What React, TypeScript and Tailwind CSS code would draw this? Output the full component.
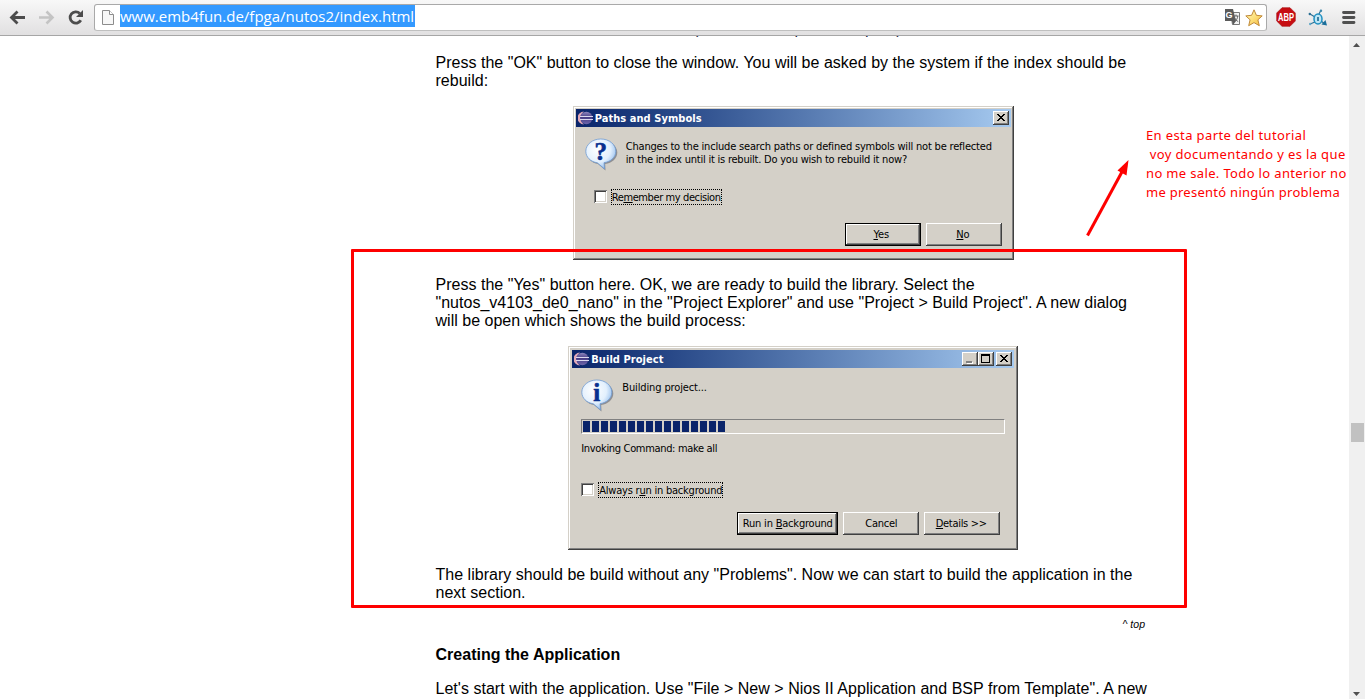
import type { ReactNode } from "react";

const TAHOMA = "font-['DejaVu_Sans_Condensed','DejaVu_Sans',sans-serif] text-[11px] leading-[13px] text-black whitespace-pre";

function EclipseIcon() {
  return (
    <svg width="16" height="16" viewBox="0 0 16 16" className="shrink-0">
      <defs>
        <linearGradient id="ecl" x1="0" y1="0" x2="0" y2="1">
          <stop offset="0" stopColor="#8d86bd" />
          <stop offset="0.45" stopColor="#473c85" />
          <stop offset="1" stopColor="#6d66ab" />
        </linearGradient>
      </defs>
      <path d="M6 1.500a6.500 6.500 0 0 0 0 13a8 8 0 0 1 0-13z" fill="#e3a9b8" />
      <circle cx="8.300" cy="8" r="6.200" fill="url(#ecl)" />
      <path d="M2 6.500h13M2 9.500h13" stroke="#dcd9ef" strokeWidth="1" />
    </svg>
  );
}

function Balloon({ glyph }: { glyph: string }) {
  return (
    <svg width="34" height="34" viewBox="0 0 34 34" className="shrink-0">
      <defs>
        <radialGradient id="bal" cx="0.4" cy="0.35" r="0.7">
          <stop offset="0" stopColor="#ffffff" />
          <stop offset="0.6" stopColor="#e3f0fd" />
          <stop offset="1" stopColor="#8db8ea" />
        </radialGradient>
      </defs>
      <path
        d="M17 2.500C9 2.500 2 8 2 14.500c0 6 4.800 10.500 11 11.600L20.500 32.500l-.3-6.500C27 25 32.300 20.500 32.300 14.500C32.300 8 25.500 2.500 17 2.500z"
        fill="#5f6470"
        opacity="0.6"
      />
      <path
        d="M15.800 1C7.500 1 .8 6.500.8 13.200c0 6 4.800 10.500 11.500 11.600L19.600 31l-.6-6.300C26 23.600 30.800 19.200 30.800 13.200C30.800 6.500 24.300 1 15.800 1z"
        fill="url(#bal)"
        stroke="#6f9bd3"
        strokeWidth="0.8"
      />
      <text
        x="15.800"
        y="21.500"
        textAnchor="middle"
        fontFamily="Liberation Serif"
        fontWeight="bold"
        fontSize="25"
        fill="#08308f"
        stroke="#08308f"
        strokeWidth="0.6"
      >
        {glyph}
      </text>
    </svg>
  );
}

function CaptionButton({ kind }: { kind: "min" | "max" | "close" }) {
  return (
    <button className="h-[14px] w-4 shrink-0 bg-[#d4d0c8] shadow-[inset_-1px_-1px_#404040,inset_1px_1px_#ffffff,inset_-2px_-2px_#808080]">
      <svg width="16" height="14" viewBox="0 0 16 14" shapeRendering="crispEdges" className="block">
        {kind === "min" && (
          <>
            <path d="M5 10h6v2H5z" fill="#fff" />
            <path d="M4 9h6v2H4z" fill="#808080" />
          </>
        )}
        {kind === "max" && <path d="M3 2h9v9H3zM4 4v6h7V4z" fill="#000" fillRule="evenodd" />}
        {kind === "close" && (
          <path
            d="M4 3h2v1h1v1h2V4h1V3h2v1h-1v1h-1v1H9v1h1v1h1v1h1v1h-2V9H9V8H7v1H6v1H4V9h1V8h1V7h1V6H6V5H5V4H4z"
            fill="#000"
          />
        )}
      </svg>
    </button>
  );
}

function TitleBar({ title, buttons }: { title: string; buttons: ReactNode }) {
  return (
    <div className="flex h-[18px] items-start bg-linear-to-r from-[#0a246a] to-[#a6caf0] pr-[2px] pl-[2px] pt-[2px]">
      <div className="-mt-px">
        <EclipseIcon />
      </div>
      <span className="ml-px grow pt-px font-['DejaVu_Sans_Condensed','DejaVu_Sans',sans-serif] text-[11px] leading-[13px] font-bold tracking-[0.05px] whitespace-pre text-white">
        {title}
      </span>
      {buttons}
    </div>
  );
}

function WinButton({ primary, className, children }: { primary?: boolean; className: string; children: ReactNode }) {
  const bevel = primary
    ? "border border-black shadow-[inset_-1px_-1px_#404040,inset_1px_1px_#ffffff,inset_-2px_-2px_#808080]"
    : "shadow-[inset_-1px_-1px_#404040,inset_1px_1px_#ffffff,inset_-2px_-2px_#808080]";
  return (
    <button className={`flex h-[23px] items-center justify-center bg-[#d4d0c8] ${TAHOMA} ${bevel} ${className}`}>
      <span>{children}</span>
    </button>
  );
}

function CheckRow({ width, children }: { width: string; children: ReactNode }) {
  return (
    <label className="flex h-4 items-start gap-1">
      <span className="mt-px size-[13px] shrink-0 bg-white shadow-[inset_1px_1px_#808080,inset_-1px_-1px_#ffffff,inset_2px_2px_#404040,inset_-2px_-2px_#d4d0c8]" />
      <span className={`h-4 border border-dotted border-black pt-px ${TAHOMA} ${width}`}>{children}</span>
    </label>
  );
}

const U = ({ children }: { children: string }) => (
  <span className="underline decoration-1 underline-offset-[1px]">{children}</span>
);

const FRAME =
  "mx-auto bg-[#d4d0c8] shadow-[inset_-1px_-1px_#404040,inset_1px_1px_#d4d0c8,inset_-2px_-2px_#808080,inset_2px_2px_#ffffff]";

function PathsDialog() {
  return (
    <div className={`h-[154px] w-[441px] p-[3px] ${FRAME}`}>
      <TitleBar title="Paths and Symbols" buttons={<CaptionButton kind="close" />} />
      <div className="flex h-[62px] pt-[11px] pl-[9px]">
        <Balloon glyph="?" />
        <div className={`pt-[2px] pl-[7px] ${TAHOMA}`}>
          <div className="tracking-[-0.19px]">Changes to the include search paths or defined symbols will not be reflected</div>
          <div className="tracking-[-0.22px]">in the index until it is rebuilt. Do you wish to rebuild it now?</div>
        </div>
      </div>
      <div className="pl-[18px]">
        <CheckRow width="w-[111px] tracking-[-0.4px]">
          Re<U>m</U>ember my decision
        </CheckRow>
      </div>
      <div className="mt-[18px] flex justify-end gap-[5px] pr-[9px]">
        <WinButton primary className="w-[76px] pr-[3px] tracking-[-0.1px]">
          <U>Y</U>es
        </WinButton>
        <WinButton className="w-[76px] pr-[2px] tracking-[-0.3px]">
          <U>N</U>o
        </WinButton>
      </div>
    </div>
  );
}

function BuildDialog() {
  return (
    <div className={`h-[204px] w-[450px] p-1 ${FRAME}`}>
      <TitleBar
        title="Build Project"
        buttons={
          <div className="flex">
            <CaptionButton kind="min" />
            <CaptionButton kind="max" />
            <div className="w-[2px]" />
            <CaptionButton kind="close" />
          </div>
        }
      />
      <div className="flex flex-col pl-[9px]">
        <div className="flex h-[51px] pt-3">
          <div className="-mt-px">
            <Balloon glyph="i" />
          </div>
          <div className={`pt-px pl-[7px] tracking-[-0.13px] ${TAHOMA}`}>Building project...</div>
        </div>
        <div className="flex h-[15px] w-[424px] gap-[2px] border border-t-[#808080] border-r-white border-b-white border-l-[#808080] p-px">
          {Array.from({ length: 16 }, (_, i) => (
            <span key={i} className="h-[11px] w-[7px] bg-[#0a246a]" />
          ))}
        </div>
        <div className={`mt-2 tracking-[-0.33px] ${TAHOMA}`}>Invoking Command: make all</div>
        <div className="mt-[27px]">
          <CheckRow width="w-[125px] tracking-[-0.22px]">
            Always r<U>u</U>n in background
          </CheckRow>
        </div>
        <div className="mt-[14px] flex justify-end gap-[5px] pr-[14px]">
          <WinButton primary className="w-[101px] tracking-[-0.2px]">
            Run in <U>B</U>ackground
          </WinButton>
          <WinButton className="w-[76px] tracking-[-0.25px]">Cancel</WinButton>
          <WinButton className="w-[76px] pr-[2px] tracking-[-0.3px]">
            <U>D</U>etails &gt;&gt;
          </WinButton>
        </div>
      </div>
    </div>
  );
}

function Toolbar() {
  return (
    <header className="flex h-9 shrink-0 items-start border-b border-[#a6a6a6] bg-linear-to-b from-[#f8f8f8] to-[#e1e0e1]">
      <div className="flex w-[94px] shrink-0 pt-[9px] pl-2">
        <svg width="86" height="18" viewBox="0 0 86 18" fill="none">
          <path d="M17 8.500H4M9.500 2.500L3.500 8.500l6 6" stroke="#4c4c4c" strokeWidth="2.800" />
          <path d="M31 8.500h13M38.500 2.500l6 6l-6 6" stroke="#c4c4c4" strokeWidth="2.600" />
          <path d="M71.800 4.400A5.700 5.700 0 1 0 72.800 11.300" stroke="#4c4c4c" strokeWidth="2.800" />
          <path d="M75 1v7h-7z" fill="#4c4c4c" />
        </svg>
      </div>
      <div className="mt-1 flex h-[27px] w-[1173px] shrink-0 items-start rounded-[3px] border border-[#a9a9a9] border-b-[#bfbfbf] bg-white">
        <svg width="12" height="16" viewBox="0 0 12 16" className="mt-[5px] ml-[7px] shrink-0">
          <path d="M.5.500h7l4 4v10H.5z" fill="#f7f7f7" stroke="#8c8c8c" />
          <path d="M7.500.500v4h4" fill="#fff" stroke="#8c8c8c" />
        </svg>
        <div className="ml-[6px] h-[22px] w-[295px] bg-[#3399ff] font-['Open_Sans',sans-serif] text-[15px] leading-[22px] whitespace-nowrap text-white">
          www.emb4fun.de/fpga/nutos2/index.html
        </div>
        <div className="grow" />
        <svg width="17" height="17" viewBox="0 0 17 17" className="mt-[4px] mr-[4px] shrink-0">
          <path d="M6.500 3.500h9v12h-7z" fill="#f4f4f4" stroke="#777" />
          <path d="M1 0h8l3 12H1z" fill="#5b5b5b" />
          <text x="1.500" y="9" fontFamily="Liberation Sans" fontWeight="bold" fontSize="9" fill="#fff">
            G
          </text>
          <path d="M9.500 7h5M12 5.500V7M10.500 12.500c2-1 3-3 3.200-5.500M10.500 8.500c.8 2 2 3.300 3.700 4" stroke="#666" fill="none" />
          <path d="M8 12h4l-3 4z" fill="#5b5b5b" />
        </svg>
        <svg width="18" height="18" viewBox="0 0 18 18" className="mt-[4px] mr-[3px] shrink-0">
          <defs>
            <linearGradient id="star" x1="0" y1="0" x2="1" y2="1">
              <stop offset="0" stopColor="#fff7c0" />
              <stop offset="0.5" stopColor="#fde07a" />
              <stop offset="1" stopColor="#f3b63a" />
            </linearGradient>
          </defs>
          <path
            d="M9 .8l2.400 5.500l5.800.6l-4.300 3.900l1.400 5.900L9 13.600l-5.300 3.100l1.400-5.900L.8 6.900l5.800-.6z"
            fill="url(#star)"
            stroke="#c08a3a"
            strokeLinejoin="round"
          />
        </svg>
      </div>
      <svg width="20" height="20" viewBox="0 0 20 20" className="mt-[7px] ml-[8.500px] shrink-0">
        <path d="M6 .7h8L19.300 6v8L14 19.300H6L.7 14V6z" fill="#c70d12" stroke="#a50a0e" strokeWidth="0.600" />
        <text
          x="10"
          y="13.600"
          textAnchor="middle"
          textLength="16"
          lengthAdjust="spacingAndGlyphs"
          fontFamily="Liberation Sans"
          fontWeight="bold"
          fontSize="10"
          fill="#fff"
        >
          ABP
        </text>
      </svg>
      <svg width="20" height="18" viewBox="0 0 20 18" className="mt-[9px] ml-[12px] shrink-0" fill="none">
        <path d="M2 5l5 3M11 5l2-4M2 15l5-2M13 12l4 3" stroke="#2b6f94" strokeWidth="1.200" />
        <ellipse cx="10" cy="10" rx="4" ry="5" fill="#bfe6f5" stroke="#1f8fc0" strokeWidth="1.500" />
        <path d="M10 8v4" stroke="#0f5e88" strokeWidth="1.500" />
        <circle cx="1.800" cy="5" r="1.200" fill="#2b6f94" />
        <circle cx="13" cy="1.800" r="1.200" fill="#3f89ad" />
        <circle cx="2.200" cy="15" r="1.200" fill="#62a7c6" />
        <path d="M17.500 11l1.500 5.500l-5.500-1z" fill="#1b6f9c" />
      </svg>
      <svg width="14" height="14" viewBox="0 0 14 14" className="mt-[11px] ml-[14.500px] shrink-0">
        <path d="M1.500 1.500h10.500M1.500 6.500h10.500M1.500 11.500h10.500" stroke="#505050" strokeWidth="2.800" strokeLinecap="round" />
      </svg>
    </header>
  );
}

function Scrollbar() {
  return (
    <div className="flex w-4 shrink-0 flex-col items-center bg-[#f0f0f0]">
      <svg width="8" height="4" viewBox="0 0 8 4" className="mt-[7px]">
        <path d="M0 4L3.500 0L7 4z" fill="#505050" />
      </svg>
      <div className="mt-[376px] ml-px h-[19px] w-[13px] bg-[#c1c1c1]" />
      <div className="grow" />
      <svg width="8" height="4" viewBox="0 0 8 4" className="mb-[3px]">
        <path d="M0 0h7L3.500 4z" fill="#505050" />
      </svg>
    </div>
  );
}

export default function App() {
  return (
    <div className="relative flex h-[699px] w-[1365px] flex-col overflow-hidden bg-white">
      <Toolbar />
      <div className="flex min-h-0 grow">
        <main className="grow overflow-hidden pl-[435.500px] font-['Liberation_Sans',Arial,sans-serif] text-base leading-[18px] text-black">
          <article className="-mt-4 w-[715.500px] tracking-[0.015px] whitespace-nowrap">
            <p className="pl-[257.500px] text-[#222244]">(see the example of the path)</p>
            <p className="mt-4">
              Press the "OK" button to close the window. You will be asked by the system if the index should be
              <br />
              rebuild:
            </p>
            <div className="mt-4">
              <PathsDialog />
            </div>
            <p className="mt-4">
              Press the "Yes" button here. OK, we are ready to build the library. Select the
              <br />
              "nutos_v4103_de0_nano" in the "Project Explorer" and use "Project &gt; Build Project". A new dialog
              <br />
              will be open which shows the build process:
            </p>
            <div className="mt-4">
              <BuildDialog />
            </div>
            <p className="mt-4">
              The library should be build without any "Problems". Now we can start to build the application in the
              <br />
              next section.
            </p>
            <p className="mt-4 pr-[6px] text-right text-[10.500px] leading-[12px] italic">^ top</p>
            <h3 className="mt-4 font-bold">Creating the Application</h3>
            <p className="mt-4 tracking-[0.03px]">
              Let's start with the application. Use "File &gt; New &gt; Nios II Application and BSP from Template". A new
            </p>
          </article>
        </main>
        <Scrollbar />
      </div>

      <div className="absolute top-[249px] left-[351px] h-[359px] w-[836px] rounded-[1px] border-3 border-[#fe0000]" />
      <svg className="absolute top-[156px] left-[1082px]" width="50" height="84" viewBox="0 0 50 84">
        <path d="M5.500 79.500L41 14" stroke="#fe0000" strokeWidth="3" />
        <path d="M46.500 4L35.500 14.500L44.500 19.500z" fill="#fe0000" />
      </svg>
      <div className="absolute top-[126px] left-[1146px] font-['Noto_Sans',sans-serif] text-[13px] leading-[19px] whitespace-pre text-[#fe0000]">
        <div className="tracking-[0.38px]">En esta parte del tutorial</div>
        <div className="tracking-[0.37px]"> voy documentando y es la que</div>
        <div className="tracking-[0.35px]">no me sale. Todo lo anterior no</div>
        <div className="tracking-[0.27px]">me presentó ningún problema</div>
      </div>
    </div>
  );
}
